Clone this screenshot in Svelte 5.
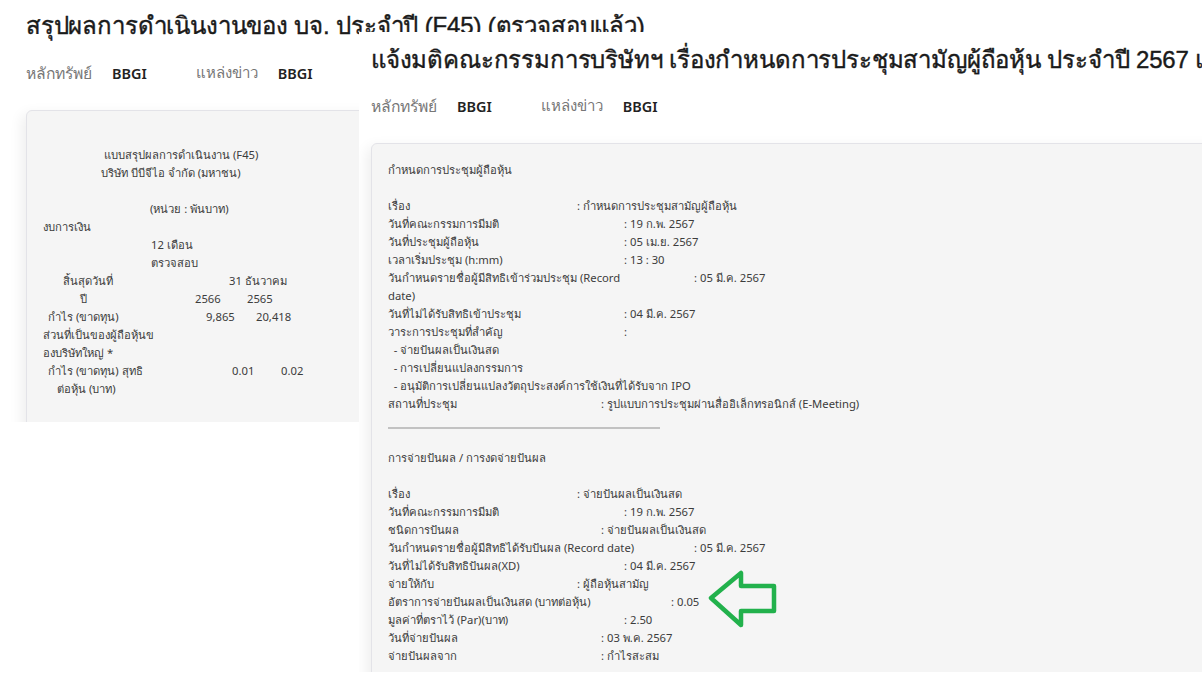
<script>
  const leftRows = [
    { x: 61, t: 'แบบสรุปผลการดำเนินงาน (F45)' },
    { x: 58, t: 'บริษัท บีบีจีไอ จำกัด (มหาชน)' },
    { x: 0, t: '' },
    { x: 107, t: '(หน่วย : พันบาท)' },
    { x: 0, t: 'งบการเงิน' },
    { x: 108, t: '12 เดือน' },
    { x: 108, t: 'ตรวจสอบ' },
    { x: 20, t: 'สิ้นสุดวันที่', c: [[186, '31 ธันวาคม']] },
    { x: 37, t: 'ปี', c: [[152, '2566'], [204, '2565']] },
    { x: 5, t: 'กำไร (ขาดทุน)', c: [[163, '9,865'], [213, '20,418']] },
    { x: 0, t: 'ส่วนที่เป็นของผู้ถือหุ้นข' },
    { x: 0, t: 'องบริษัทใหญ่ *' },
    { x: 5, t: 'กำไร (ขาดทุน) สุทธิ', c: [[189, '0.01'], [238, '0.02']] },
    { x: 14, t: 'ต่อหุ้น (บาท)' }
  ];

  const meeting = [
    ['เรื่อง', 189, ': กำหนดการประชุมสามัญผู้ถือหุ้น'],
    ['วันที่คณะกรรมการมีมติ', 236, ': 19 ก.พ. 2567'],
    ['วันที่ประชุมผู้ถือหุ้น', 236, ': 05 เม.ย. 2567'],
    ['เวลาเริ่มประชุม (h:mm)', 236, ': 13 : 30'],
    ['วันกำหนดรายชื่อผู้มีสิทธิเข้าร่วมประชุม (Record', 306, ': 05 มี.ค. 2567'],
    ['date)', 0, ''],
    ['วันที่ไม่ได้รับสิทธิเข้าประชุม', 236, ': 04 มี.ค. 2567'],
    ['วาระการประชุมที่สำคัญ', 236, ':'],
    ['  - จ่ายปันผลเป็นเงินสด', 0, ''],
    ['  - การเปลี่ยนแปลงกรรมการ', 0, ''],
    ['  - อนุมัติการเปลี่ยนแปลงวัตถุประสงค์การใช้เงินที่ได้รับจาก IPO', 0, ''],
    ['สถานที่ประชุม', 213, ': รูปแบบการประชุมผ่านสื่ออิเล็กทรอนิกส์ (E-Meeting)']
  ];

  const dividend = [
    ['เรื่อง', 189, ': จ่ายปันผลเป็นเงินสด'],
    ['วันที่คณะกรรมการมีมติ', 236, ': 19 ก.พ. 2567'],
    ['ชนิดการปันผล', 213, ': จ่ายปันผลเป็นเงินสด'],
    ['วันกำหนดรายชื่อผู้มีสิทธิได้รับปันผล (Record date)', 306, ': 05 มี.ค. 2567'],
    ['วันที่ไม่ได้รับสิทธิปันผล(XD)', 236, ': 04 มี.ค. 2567'],
    ['จ่ายให้กับ', 189, ': ผู้ถือหุ้นสามัญ'],
    ['อัตราการจ่ายปันผลเป็นเงินสด (บาทต่อหุ้น)', 283, ': 0.05'],
    ['มูลค่าที่ตราไว้ (Par)(บาท)', 236, ': 2.50'],
    ['วันที่จ่ายปันผล', 213, ': 03 พ.ค. 2567'],
    ['จ่ายปันผลจาก', 213, ': กำไรสะสม']
  ];
</script>

{#snippet meta()}
  <div class="meta">
    <span class="key">หลักทรัพย์</span><b>BBGI</b>
    <span class="key second">แหล่งข่าว</span><b>BBGI</b>
  </div>
{/snippet}

{#snippet row(r)}
  <div class="row">
    <span class="label">{r[0]}</span>
    {#if r[2]}<span class="val" style="left:{r[1]}px">{r[2]}</span>{/if}
  </div>
{/snippet}

<div class="canvas">
  <section class="win left">
    <h1>สรุปผลการดำเนินงานของ บจ. ประจำปี (F45) (ตรวจสอบแล้ว)</h1>
    {@render meta()}
    <div class="card">
      {#each leftRows as r}
        <div class="row">
          <span class="label" style="padding-left:{r.x}px">{r.t}</span>
          {#each r.c ?? [] as c}
            <span class="val" style="left:{c[0]}px">{c[1]}</span>
          {/each}
        </div>
      {/each}
    </div>
  </section>

  <section class="win right">
    <h1>แจ้งมติคณะกรรมการบริษัทฯ เรื่องกำหนดการประชุมสามัญผู้ถือหุ้น ประจำปี 2567 และการจ่ายปันผล</h1>
    {@render meta()}
    <div class="card">
      <div class="row">กำหนดการประชุมผู้ถือหุ้น</div>
      <div class="row"></div>
      {#each meeting as r}{@render row(r)}{/each}
      <div class="rule"></div>
      <div class="row"></div>
      <div class="row">การจ่ายปันผล / การงดจ่ายปันผล</div>
      <div class="row"></div>
      {#each dividend as r}{@render row(r)}{/each}
    </div>
    <svg class="arrow" viewBox="0 0 72 62" width="72" height="62" aria-hidden="true">
      <path d="M4 30 L34 5 V18 H67 V43 H34 V57 Z" fill="none" stroke="#22b14c" stroke-width="4.5" stroke-linejoin="round" />
    </svg>
  </section>
</div>

<style>
  :global(body) {
    margin: 0;
    background: #fff;
  }
  .canvas {
    position: relative;
    width: 1202px;
    height: 677px;
    overflow: hidden;
    font-family: "Noto Sans", "Open Sans", "Liberation Sans", sans-serif;
    color: #333;
  }
  .win {
    position: absolute;
    background: #fff;
    overflow: hidden;
  }
  .left {
    left: 0;
    top: 0;
    width: 700px;
    height: 422px;
    padding: 11px 0 0 26px;
    box-sizing: border-box;
  }
  .right {
    left: 359px;
    top: 32px;
    width: 843px;
    height: 640px;
    padding: 13px 0 0 12px;
    box-sizing: border-box;
  }
  h1 {
    margin: 0;
    font: 400 24px/30px "Liberation Sans", "Noto Sans", sans-serif;
    -webkit-text-stroke: 0.4px #1a1a1a;
    letter-spacing: -0.17px;
    color: #1a1a1a;
    white-space: nowrap;
  }
  .meta {
    display: flex;
    align-items: center;
    margin-top: 19px;
    height: 24px;
    font-size: 15.7px;
    white-space: nowrap;
  }
  .left .meta {
    margin-top: 20px;
  }
  .key {
    color: #777;
    margin-right: 20px;
  }
  .key.second {
    margin-left: 49px;
    font-size: 15px;
  }
  .meta b {
    font-weight: 600;
    font-size: 14.4px;
    color: #222;
  }
  .card {
    margin-top: 25px;
    padding: 17px 16px;
    width: 900px;
    height: 700px;
    box-sizing: border-box;
    background: #f5f5f5;
    border: 1px solid #e3e3e8;
    border-radius: 6px;
    box-shadow: -4px 4px 14px rgba(0, 0, 0, 0.07);
  }
  .left .card {
    padding-top: 35px;
  }
  .row {
    position: relative;
    height: 18px;
    line-height: 18px;
    font-size: 11.25px;
    color: #3c3c3c;
    white-space: pre;
  }
  .val {
    position: absolute;
    top: 0;
  }
  .rule {
    width: 272px;
    height: 2px;
    margin-top: 14px;
    margin-bottom: 2px;
    background: #c2c2c2;
  }
  .arrow {
    position: absolute;
    left: 348px;
    top: 536px;
  }
</style>
